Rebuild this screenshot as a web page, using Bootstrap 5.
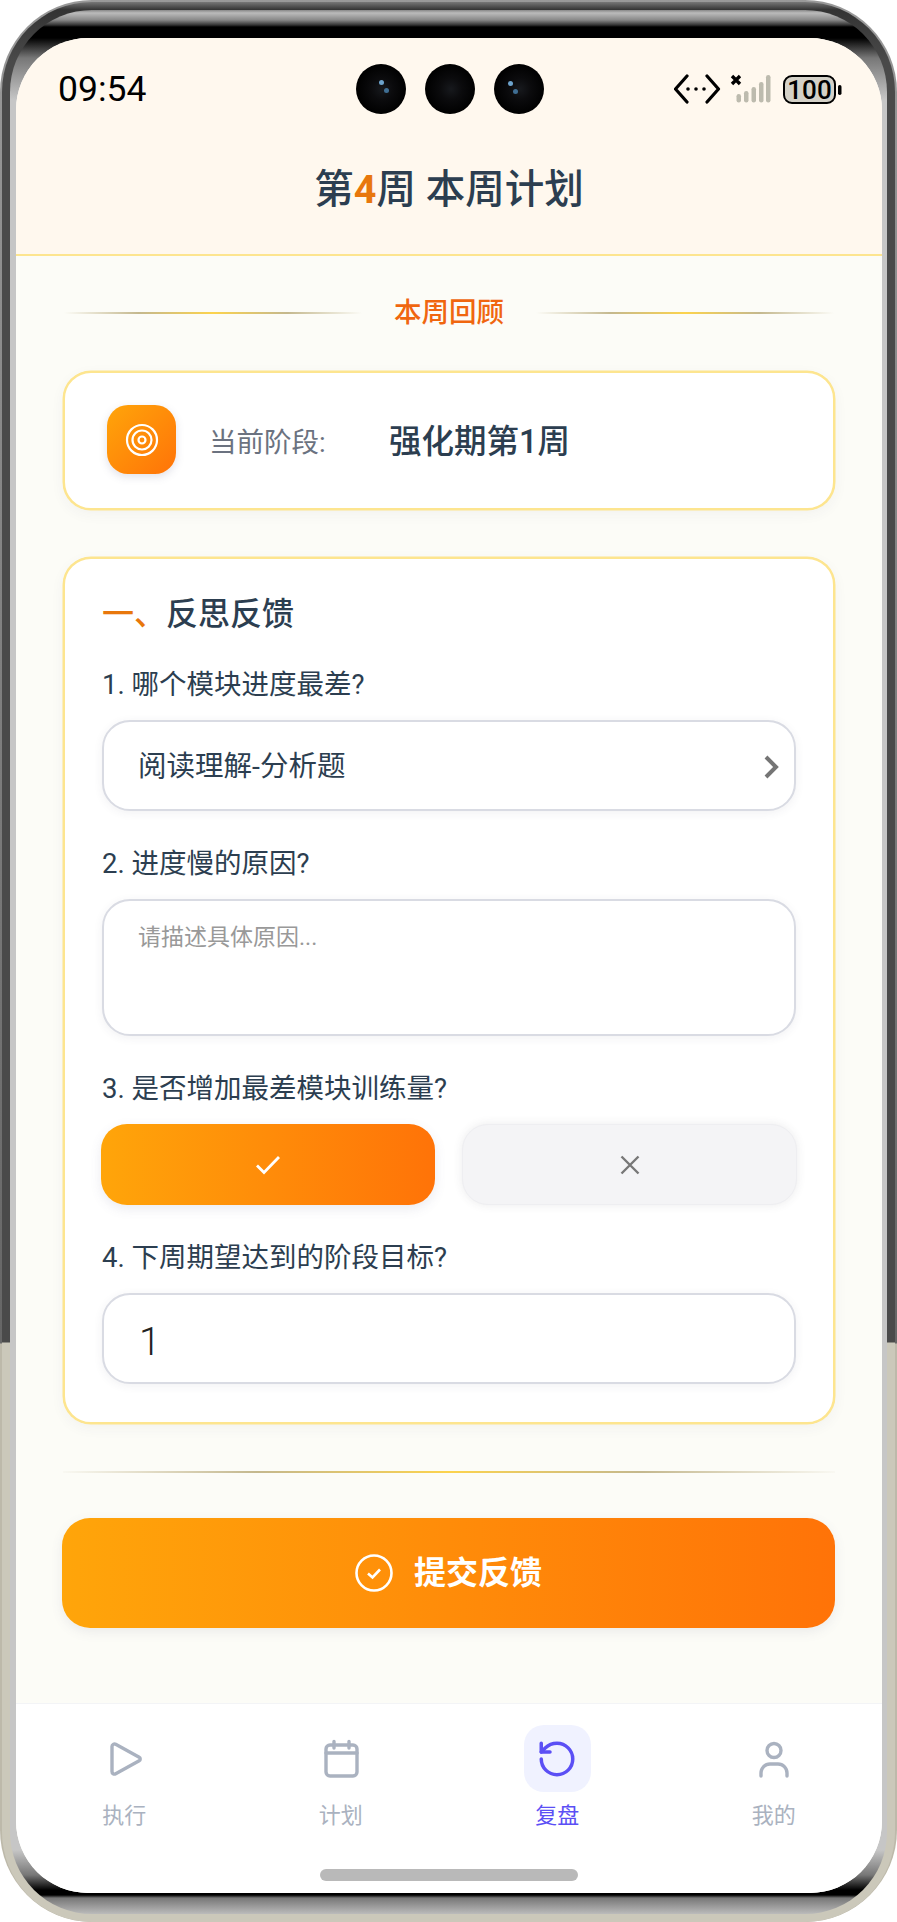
<!DOCTYPE html>
<html lang="zh-CN">
<head>
  <meta charset="UTF-8" />
  <meta name="viewport" content="width=device-width, initial-scale=1.0" />
  <title>本周计划</title>
  <link rel="stylesheet" href="https://cdn.jsdelivr.net/npm/bootstrap@5.3.0/dist/css/bootstrap.min.css">
  <style>
    html, body { margin: 0; background: #fff; }
    body { width: 897px; height: 1922px; overflow: hidden; font-family: "Roboto", "Noto Sans CJK SC", sans-serif; color: #2c3e50; }

    /* phone frame */
    .shell { width: 897px; height: 1922px; border-radius: 92px; padding: 2px 2px 0; overflow: hidden;
      background: linear-gradient(to bottom, #999 0, #666 1343px, #bdb9aa 1344px, #bdb9aa 100%); }
    .bezel { height: 1920px; border-radius: 90px; padding: 8px 8px 8px;
      background: linear-gradient(to bottom, #777 0, #333 8px, #4a4a4a 60px, #4a4a4a 1340px, #cbc8ba 1341px, #cbc8ba 100%); }
    .bezel-in { height: 1904px; border-radius: 82px; padding: 28px 5px 21px 6px;
      background: linear-gradient(to bottom, #888 0, #bbb 3px, #888 10px, #333 15px, #000 17px, #000 28px, #777 48px, #c6c6c6 90px, #c6c6c6 1840px, #777 1865px, #000 1880px, #000 1885px, #777 1888px, #bbb 1904px); }
    .screen { position: relative; height: 1855px; border-radius: 72px; overflow: hidden; background: #fcfcf7; display: flex; flex-direction: column; }

    /* top */
    .top-area { height: 218px; flex: none; background: #fff8ee; border-bottom: 2px solid #fde58f; }
    .status-bar { height: 102px; padding: 0 40px 0 42px; position: relative; }
    .clock { font-size: 35.500px; color: #000; line-height: 1; padding-top: 2px; }
    .cams { position: absolute; left: 340px; top: 26px; gap: 19px; }
    .cam { width: 50px; height: 50px; border-radius: 50%; background: radial-gradient(circle at 52% 50%, #17191d 0, #0b0b0d 30%, #000 70%, #222 100%); position: relative; }
    .cam-lens::before, .cam-lens::after { content: ""; position: absolute; border-radius: 50%; background: #6da3cc; width: 5px; height: 5px; left: 23px; top: 16px; }
    .cam-lens::after { left: 28px; top: 24px; background: #3f6e93; }
    .cam-lens.cam-right::before { left: 14px; top: 17px; }
    .cam-lens.cam-right::after { left: 19px; top: 25px; }
    .page-title { margin: 0; font-size: 39.500px; line-height: 48px; font-weight: 500; text-align: center; padding-top: 26px; color: #2c3e50; }
    .page-title b { color: #e8770c; font-weight: 700; font-family: "Roboto", sans-serif; }

    /* body */
    .content { flex: 1; padding: 0 47px; }
    .sec-head { height: 115px; gap: 32px; padding-bottom: 2px; }
    .sec-line { width: 298px; height: 2px; background: linear-gradient(to right, rgba(190,180,150,0), #c4b88e 25%, #fcd34d 50%, #c4b88e 75%, rgba(190,180,150,0)); }
    .sec-name { font-size: 27.500px; font-weight: 500; color: #f0660f; line-height: 30px; }
    .panel { background: #fff; border: 2px solid #fde58f; border-radius: 28px; box-shadow: 0 0 0 .5px #fde58f, 0 4px 14px rgba(60,60,90,.05); }
    .stage { height: 139px; padding-left: 42px; }
    .stage-icon { width: 69px; height: 69px; margin-bottom: 2px; border-radius: 21px; background: linear-gradient(135deg, #ffa50a, #ff7308); box-shadow: 0 3px 8px rgba(90,90,130,.18); }
    .stage-key { font-size: 27.500px; color: #6b7280; margin-left: 33px; width: 180px; padding-top: 4px; }
    .stage-val { font-size: 32.500px; font-weight: 500; color: #2c3e50; padding-top: 3px; }
    .form-panel { height: 867px; margin-top: 47px; padding: 36px 37px 0; }
    .sec-title { font-size: 32px; font-weight: 500; line-height: 39px; margin: 0 0 -2px; }
    .sec-title i { font-style: normal; color: #e8770c; }
    .q-label { font-size: 27.500px; line-height: 34px; color: #2c3e50; margin: 36px 0 18px; }
    .field { background: #fff; border: 2px solid #d9dbe3; border-radius: 28px; box-shadow: 0 2px 10px rgba(60,60,90,.07); color: #2c3e50; }
    .pick { height: 91px; padding: 3px 15px 0 34px; font-size: 28.500px; }
    .note { height: 137px; padding: 23px 34px; font-size: 23px; color: #999; line-height: 28px; }
    .num { height: 91px; padding: 8px 35px 0; font-size: 39px; font-weight: 300; color: #222; }
    .yes-no { gap: 27px; margin: 0 -1px; }
    .opt { height: 81px; border-radius: 26px; border: 0; padding: 0; flex: 0 0 334px; }
    .opt-yes { background: linear-gradient(to right, #ffa50a, #ff7308); box-shadow: 0 4px 12px rgba(90,90,130,.12); }
    .opt-no { flex-basis: 335px; background: #f4f4f6; border: 1px solid #eeeef1; box-shadow: 0 0 10px rgba(60,60,70,.1); }
    .foot-line { height: 2px; margin-top: 47px; background: linear-gradient(to right, rgba(190,180,150,.05), #c4b88e 25%, #fcd34d 50%, #c4b88e 75%, rgba(190,180,150,.05)); }
    .submit { width: 773px; height: 110px; margin: 45px 0 0 -1px; border: 0; border-radius: 28px; font-size: 32px; font-weight: 700; color: #fff; gap: 21px;
      background: linear-gradient(to right, #ffa50a, #ff7308); box-shadow: 0 4px 12px rgba(90,90,130,.1); }

    /* tab bar */
    .tabbar { height: 190px; flex: none; background: #fff; border-top: 1px solid #f3f4f6; position: relative; padding-top: 21px; }
    .tab-item { flex: 1 1 0; color: #aab2c0; font-size: 22px; line-height: 30px; text-decoration: none; }
    .tab-ico { width: 67px; height: 67px; border-radius: 20px; margin-bottom: 9px; }
    .tab-on { color: #5b4ff5; }
    .tab-on .tab-ico { background: #f0f2ff; }
    .home-bar { position: absolute; left: 304px; bottom: 12px; width: 258px; height: 12px; border-radius: 6px; background: #b9b9b9; }
  </style>
</head>
<body>
  <div class="shell"><div class="bezel"><div class="bezel-in">
    <div class="screen">

      <!-- header -->
      <div class="top-area">
        <div class="status-bar d-flex align-items-center justify-content-between">
          <span class="clock">09:54</span>
          <div class="cams d-flex">
            <span class="cam cam-lens"></span>
            <span class="cam"></span>
            <span class="cam cam-lens cam-right"></span>
          </div>
          <svg width="168" height="36" viewBox="0 0 168 36">
            <path d="M13 5 1.500 18 13 31M33 5 44.500 18 33 31" fill="none" stroke="#000" stroke-width="3.200" stroke-linecap="round" stroke-linejoin="round"/>
            <circle cx="14" cy="18" r="1.800"/><circle cx="22" cy="18" r="1.800"/><circle cx="30" cy="18" r="1.800"/>
            <path d="M58 5 66 13M66 5 58 13" stroke="#000" stroke-width="3.400"/>
            <rect x="62.500" y="23" width="4.500" height="8.500" rx="2.200" fill="#bdbbae"/>
            <rect x="70" y="20" width="4.500" height="11.500" rx="2.200" fill="#bdbbae"/>
            <rect x="77.500" y="16" width="4.500" height="15.500" rx="2.200" fill="#bdbbae"/>
            <rect x="85" y="11" width="4.500" height="20.500" rx="2.200" fill="#bdbbae"/>
            <rect x="92" y="4" width="4.500" height="27.500" rx="2.200" fill="#bdbbae"/>
            <rect x="110" y="5" width="51" height="27" rx="8" fill="#d4d1c7" stroke="#000" stroke-width="2"/>
            <text x="135.500" y="28" text-anchor="middle" font-family="Roboto, sans-serif" font-weight="500" font-size="26" fill="#000">100</text>
            <rect x="164" y="14" width="3.500" height="10" rx="1.700"/>
          </svg>
        </div>
        <h1 class="page-title">第<b>4</b>周 本周计划</h1>
      </div>

      <div class="content">
        <div class="sec-head d-flex align-items-center justify-content-center">
          <span class="sec-line"></span>
          <span class="sec-name">本周回顾</span>
          <span class="sec-line"></span>
        </div>

        <div class="panel stage d-flex align-items-center">
          <div class="stage-icon d-flex align-items-center justify-content-center">
            <svg width="34" height="34" viewBox="0 0 34 34" fill="none" stroke="#fff" stroke-width="2.200">
              <circle cx="17" cy="17" r="15"/><circle cx="17" cy="17" r="9.500"/><circle cx="17" cy="17" r="3.500"/>
            </svg>
          </div>
          <span class="stage-key">当前阶段:</span>
          <span class="stage-val">强化期第1周</span>
        </div>

        <div class="panel form-panel">
          <h2 class="sec-title"><i>一、</i>反思反馈</h2>
          <p class="q-label">1. 哪个模块进度最差?</p>
          <div class="field pick d-flex align-items-center justify-content-between">
            <span>阅读理解-分析题</span>
            <svg width="16" height="24" viewBox="0 0 16 24"><path d="M3 2 13 12 3 22" fill="none" stroke="#757575" stroke-width="4"/></svg>
          </div>
          <p class="q-label">2. 进度慢的原因?</p>
          <div class="field note">请描述具体原因...</div>
          <p class="q-label">3. 是否增加最差模块训练量?</p>
          <div class="yes-no d-flex">
            <button class="opt opt-yes d-flex align-items-center justify-content-center" type="button" aria-label="是">
              <svg width="26" height="20" viewBox="0 0 26 20"><path d="M2 10.500 9 17.500 24 2" fill="none" stroke="#fff" stroke-width="2.800"/></svg>
            </button>
            <button class="opt opt-no d-flex align-items-center justify-content-center" type="button" aria-label="否">
              <svg width="22" height="22" viewBox="0 0 22 22"><path d="M2.500 2.500 19.500 19.500M19.500 2.500 2.500 19.500" fill="none" stroke="#777" stroke-width="2.400"/></svg>
            </button>
          </div>
          <p class="q-label">4. 下周期望达到的阶段目标?</p>
          <div class="field num d-flex align-items-center">1</div>
        </div>

        <div class="foot-line"></div>

        <button class="submit d-flex align-items-center justify-content-center" type="button">
          <svg width="38" height="38" viewBox="0 0 38 38" fill="none" stroke="#fff" stroke-width="2.600">
            <circle cx="19" cy="19" r="17.500"/><path d="M13 19.500 17.500 23.500 25 15.500"/>
          </svg>
          提交反馈
        </button>
      </div>

      <!-- tabs -->
      <nav class="tabbar d-flex">
        <a class="tab-item d-flex flex-column align-items-center" href="#">
          <span class="tab-ico d-flex align-items-center justify-content-center">
            <svg width="40" height="40" viewBox="0 0 40 40" fill="none" stroke="#aab2c0" stroke-width="3.400" stroke-linejoin="round"><path d="M8 7.500a2.500 2.500 0 0 1 3.700-2.200l23.500 13a2 2 0 0 1 0 3.500l-23.500 13A2.500 2.500 0 0 1 8 32.500z"/></svg>
          </span>
          执行
        </a>
        <a class="tab-item d-flex flex-column align-items-center" href="#">
          <span class="tab-ico d-flex align-items-center justify-content-center">
            <svg width="40" height="40" viewBox="0 0 40 40" fill="none" stroke="#aab2c0" stroke-width="3.400" stroke-linecap="round"><rect x="5" y="6" width="31" height="31" rx="4"/><path d="M5 14H36M13 2.500V9M28 2.500V9"/></svg>
          </span>
          计划
        </a>
        <a class="tab-item tab-on d-flex flex-column align-items-center" href="#">
          <span class="tab-ico d-flex align-items-center justify-content-center">
            <svg width="42" height="42" viewBox="0 0 24 24" fill="none" stroke="#5b4ff5" stroke-width="2" stroke-linecap="round" stroke-linejoin="round"><path d="M3 12a9 9 0 1 0 9-9 9.750 9.750 0 0 0-6.740 2.740L3 8"/><path d="M3 3v5h5"/></svg>
          </span>
          复盘
        </a>
        <a class="tab-item d-flex flex-column align-items-center" href="#">
          <span class="tab-ico d-flex align-items-center justify-content-center">
            <svg width="40" height="40" viewBox="0 0 40 40" fill="none" stroke="#aab2c0" stroke-width="3.400" stroke-linecap="round"><circle cx="20" cy="11.500" r="7"/><path d="M7 37V34a9 9 0 0 1 9-9H24a9 9 0 0 1 9 9V37"/></svg>
          </span>
          我的
        </a>
        <span class="home-bar"></span>
      </nav>
    </div>
  </div></div></div>
  <script src="https://cdn.jsdelivr.net/npm/bootstrap@5.3.0/dist/js/bootstrap.bundle.min.js"></script>
</body>
</html>
